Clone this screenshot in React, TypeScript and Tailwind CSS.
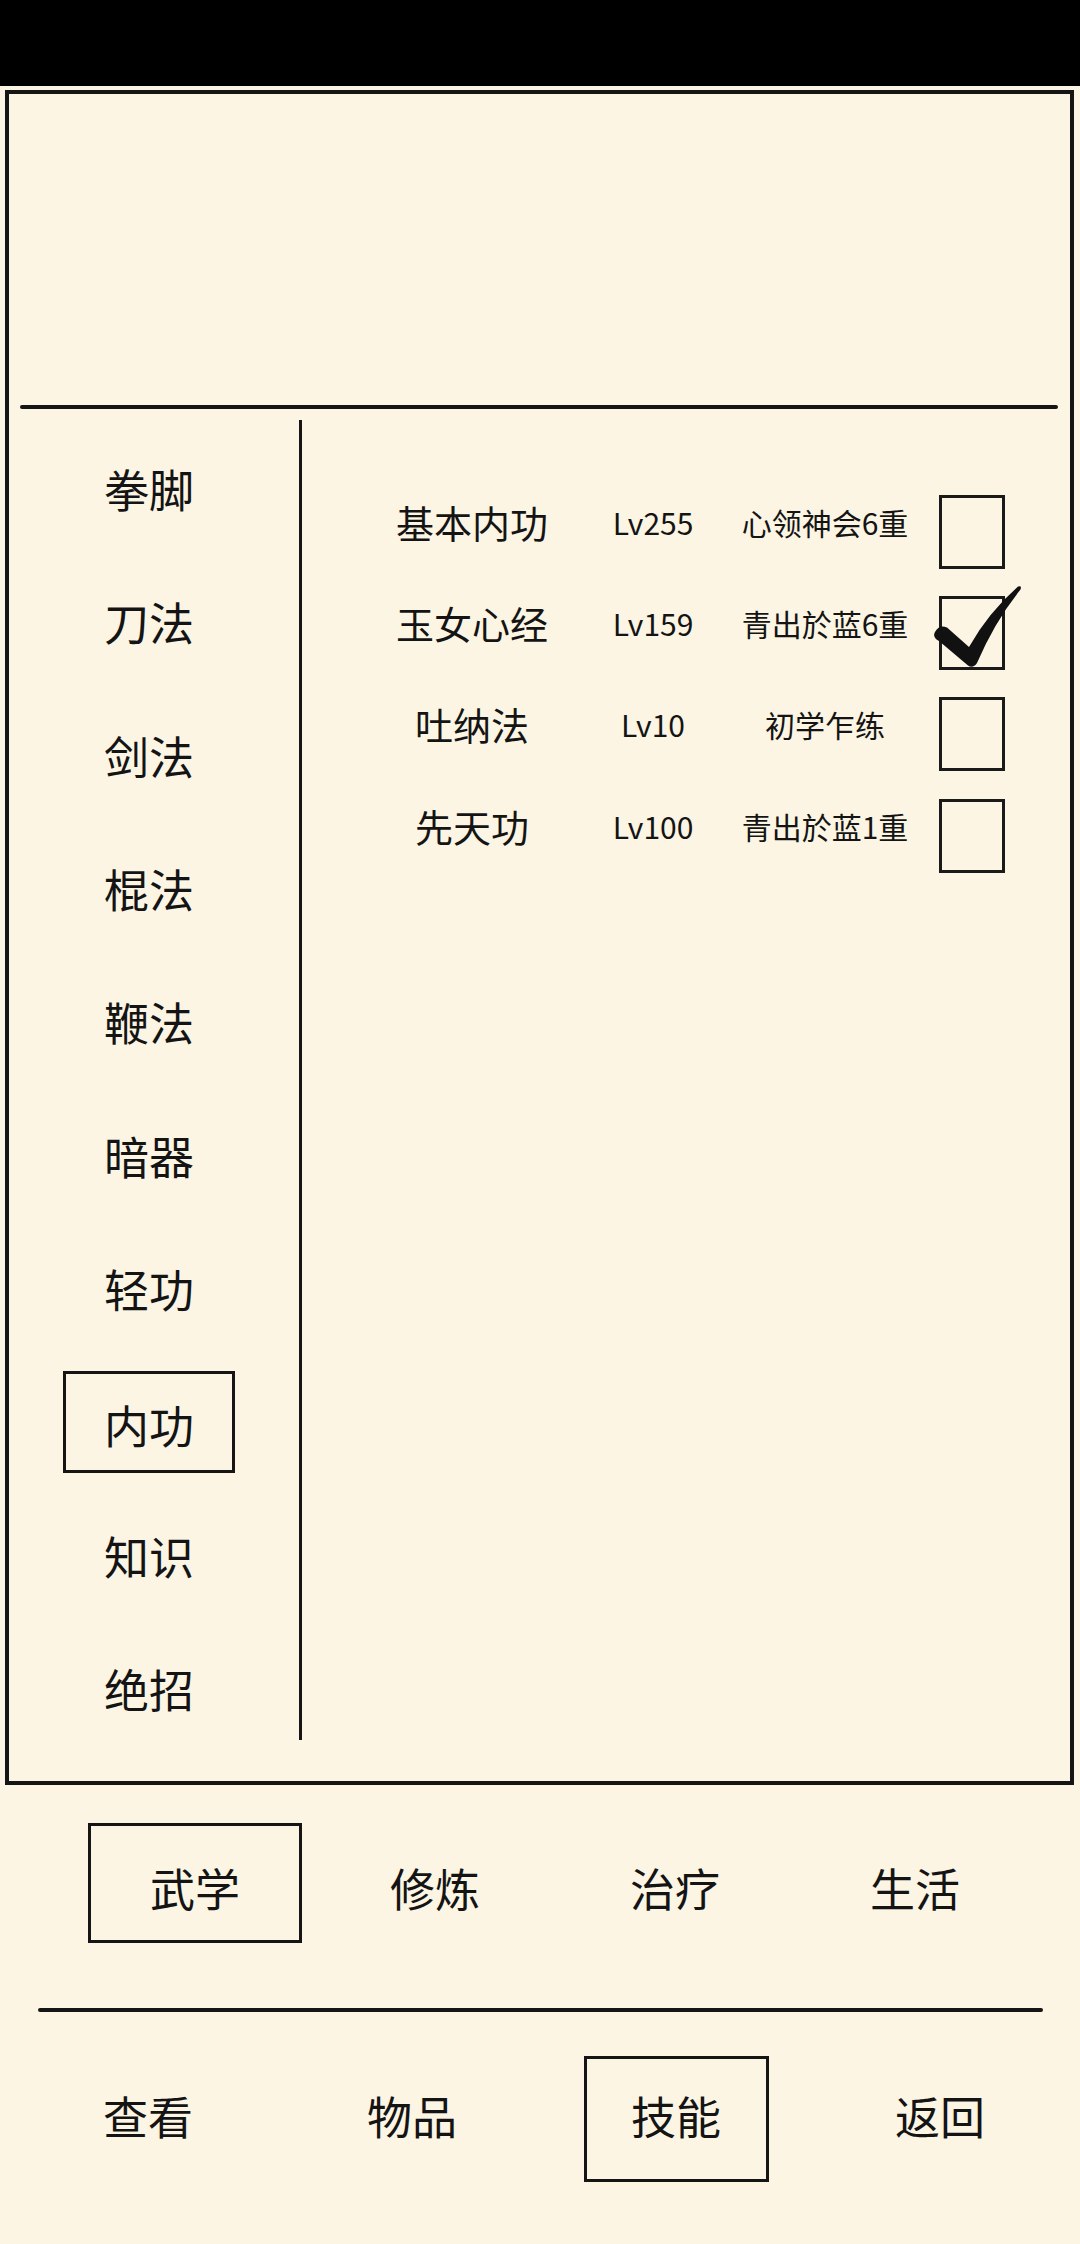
import React from "react";

const font = { fontFamily: '"Noto Sans CJK SC", "Noto Sans", sans-serif' };

const categories = ["拳脚", "刀法", "剑法", "棍法", "鞭法", "暗器", "轻功", "内功", "知识", "绝招"];

const skills = [
  { name: "基本内功", lv: "Lv255", status: "心领神会6重", checked: false },
  { name: "玉女心经", lv: "Lv159", status: "青出於蓝6重", checked: true },
  { name: "吐纳法", lv: "Lv10", status: "初学乍练", checked: false },
  { name: "先天功", lv: "Lv100", status: "青出於蓝1重", checked: false },
];

const tabs = ["武学", "修炼", "治疗", "生活"];
const nav = ["查看", "物品", "技能", "返回"];

function Check() {
  return (
    <svg
      className="absolute left-[-19px] top-[-22px]"
      width="105"
      height="100"
      viewBox="0 0 105 100"
    >
      <path
        d="M 12 55 Q 16 47 24 50.5 L 46 70 Q 65 36 95 9.5 Q 99 8 97.5 12.5 Q 72 44 54 86 Q 50 92 45 88.5 L 16 64 Q 9 60 12 55 Z"
        fill="#111111"
      />
    </svg>
  );
}

export default function App() {
  return (
    <div className="w-[1080px] h-[2244px] bg-[#fcf5e4] text-[#141414] flex flex-col" style={font}>
      <div className="h-[86px] bg-black shrink-0" />
      <div className="ml-[5px] mr-[6px] mt-[4px] h-[1695px] border-[4px] border-[#151515] flex flex-col shrink-0">
        <div className="h-[311px] shrink-0" />
        <div className="h-[4px] bg-[#151515] ml-[11px] mr-[12px] rounded-full shrink-0" />
        <div className="flex flex-1">
          <div className="w-[290px] pr-[10px] pt-[13px] flex flex-col">
            {categories.map((c) => (
              <div key={c} className="h-[133.3px] flex items-center justify-center">
                {c === "内功" ? (
                  <div className="w-[172px] h-[102px] border-[3px] border-[#151515] flex items-center justify-center pt-[6px] text-[45px] leading-none">
                    {c}
                  </div>
                ) : (
                  <span className="text-[45px] leading-none">{c}</span>
                )}
              </div>
            ))}
          </div>
          <div className="w-[3px] h-[1320px] mt-[11px] bg-[#151515] shrink-0" />
          <div className="flex-1 pt-[72px] pl-[80px] flex flex-col">
            {skills.map((s) => (
              <div key={s.name} className="h-[101.3px] flex items-center">
                <div className="flex items-center mb-[20px]">
                  <div className="w-[180px] text-center text-[38px] leading-none whitespace-nowrap">{s.name}</div>
                  <div className="w-[106px] ml-[38px] text-center text-[30px] leading-none whitespace-nowrap">{s.lv}</div>
                  <div className="w-[170px] ml-[34px] text-center text-[30px] leading-none whitespace-nowrap">{s.status}</div>
                </div>
                <div className="relative ml-[29px] w-[66px] h-[74px] border-[3px] border-[#1a1a1a] shrink-0">
                  {s.checked && <Check />}
                </div>
              </div>
            ))}
          </div>
        </div>
      </div>

      <div className="mt-[38px] h-[120px] pl-[75px] pr-[45px] grid grid-cols-4 shrink-0">
        {tabs.map((t, i) => (
          <div key={t} className="flex items-center justify-center">
            {i === 0 ? (
              <div className="w-[214px] h-[120px] border-[3px] border-[#151515] flex items-center justify-center pt-[8px] text-[45px] leading-none">
                {t}
              </div>
            ) : (
              <span className="text-[45px] leading-none pt-[8px]">{t}</span>
            )}
          </div>
        ))}
      </div>

      <div className="mt-[65px] h-[4px] ml-[38px] mr-[37px] bg-[#151515] rounded-full shrink-0" />

      <div className="mt-[44px] h-[126px] pl-[16px] pr-[8px] grid grid-cols-4 shrink-0">
        {nav.map((t, i) => (
          <div key={t} className="flex items-center justify-center">
            {i === 2 ? (
              <div className="w-[185px] h-[126px] border-[3px] border-[#151515] flex items-center justify-center pb-[8px] text-[45px] leading-none">
                {t}
              </div>
            ) : (
              <span className="text-[45px] leading-none pb-[8px]">{t}</span>
            )}
          </div>
        ))}
      </div>
    </div>
  );
}
